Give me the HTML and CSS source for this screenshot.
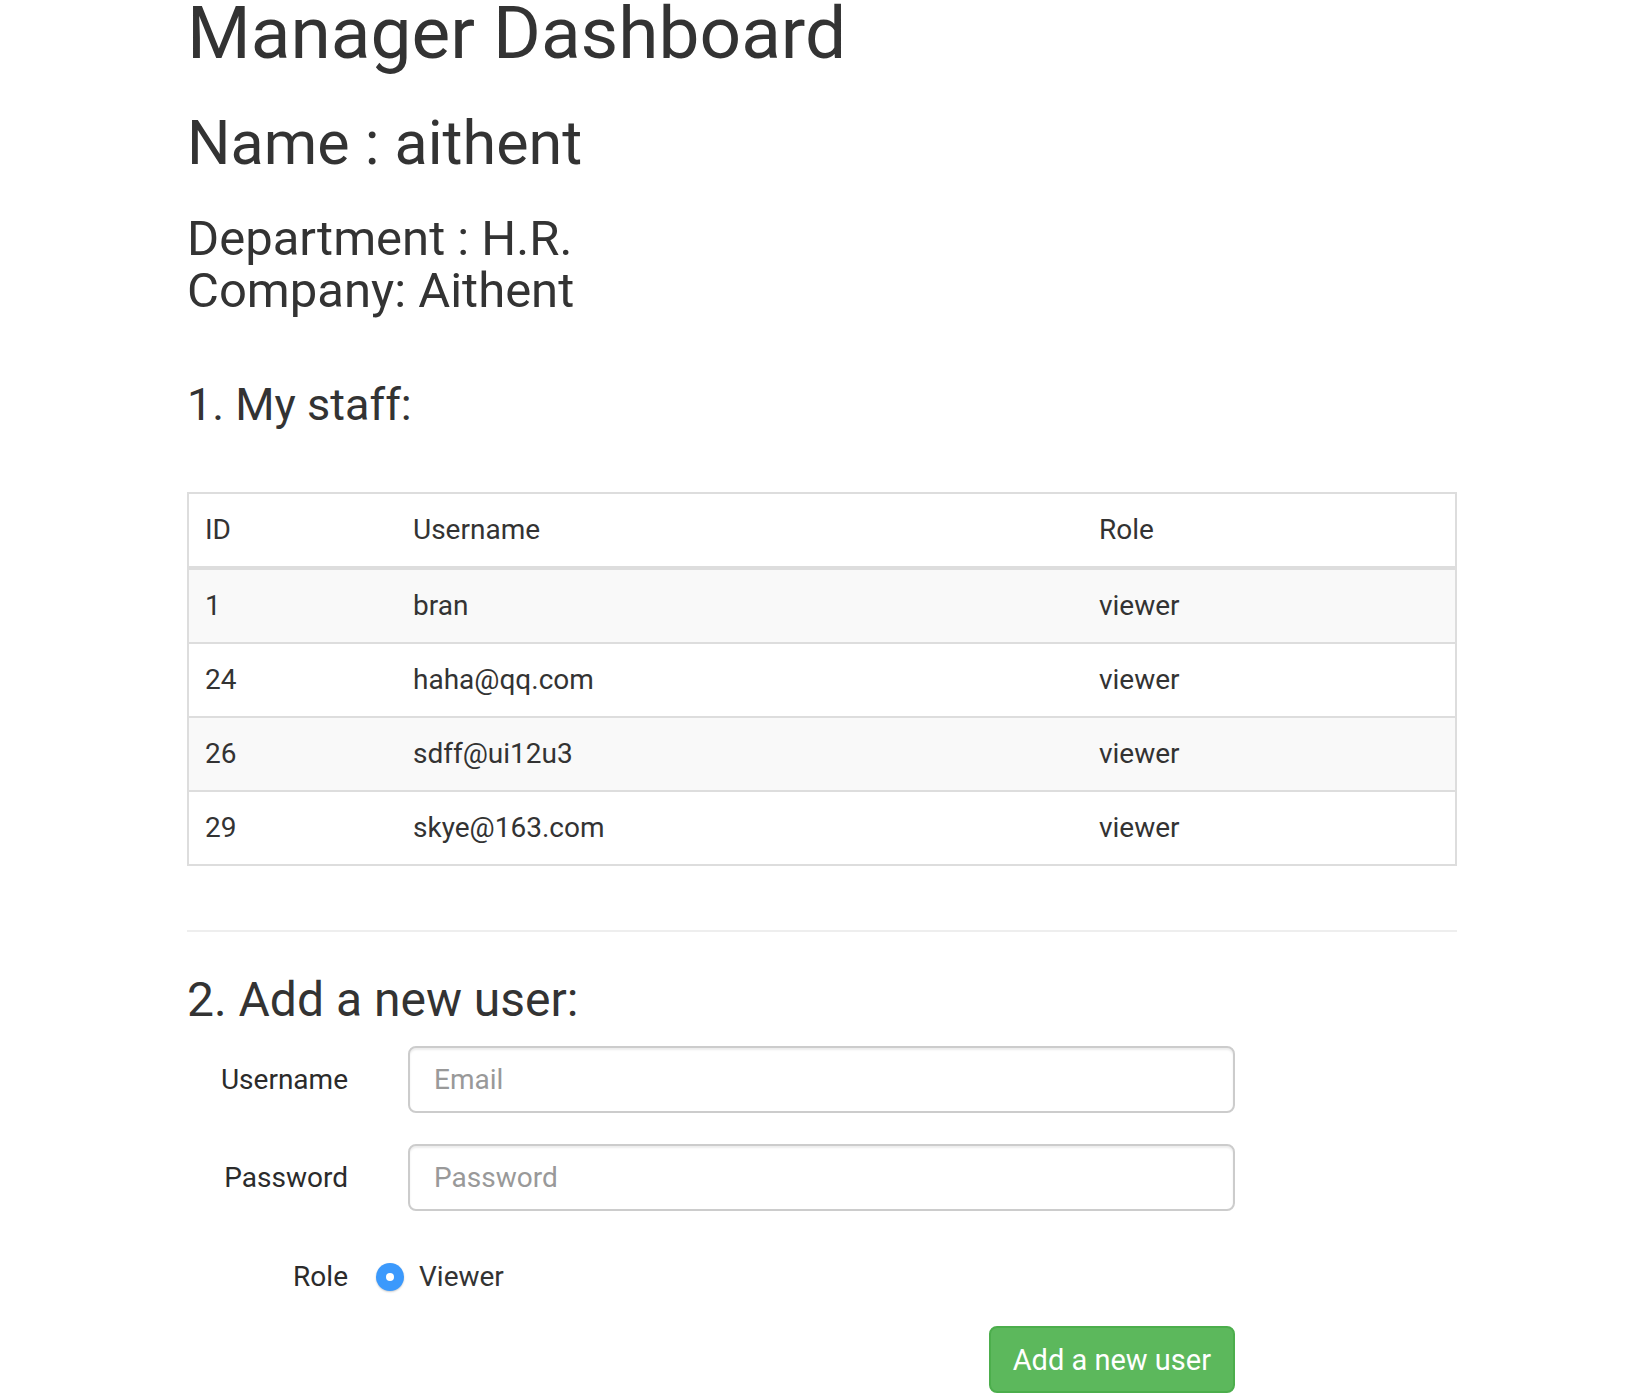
FILE: index.html
```html
<!DOCTYPE html>
<html lang="en">
<head>
<meta charset="utf-8">
<title>Manager Dashboard</title>
<link rel="stylesheet" href="styles.css">
</head>
<body>
<div class="container">
  <h1 class="title">Manager Dashboard</h1>
  <h2 class="name">Name : aithent</h2>
  <div class="info">
    <div>Department : H.R.</div>
    <div>Company: Aithent</div>
  </div>

  <h3 class="section staff-head">1. My staff:</h3>
  <table class="staff">
    <thead>
      <tr><th class="c-id">ID</th><th class="c-user">Username</th><th class="c-role">Role</th></tr>
    </thead>
    <tbody>
      <tr><td>1</td><td>bran</td><td>viewer</td></tr>
      <tr><td>24</td><td>haha@qq.com</td><td>viewer</td></tr>
      <tr><td>26</td><td>sdff@ui12u3</td><td>viewer</td></tr>
      <tr><td>29</td><td>skye@163.com</td><td>viewer</td></tr>
    </tbody>
  </table>

  <hr class="divider">

  <h3 class="section add-head">2. Add a new user:</h3>
  <form class="form">
    <div class="row">
      <label class="lbl" for="u">Username</label>
      <input class="field" id="u" type="email" placeholder="Email">
    </div>
    <div class="row row-pass">
      <label class="lbl" for="p">Password</label>
      <input class="field" id="p" type="password" placeholder="Password">
    </div>
    <div class="row row-role">
      <span class="lbl">Role</span>
      <label class="radio"><input class="radio-input" type="radio" name="role" checked><span>Viewer</span></label>
    </div>
    <div class="actions">
      <button class="btn" type="button">Add a new user</button>
    </div>
  </form>
</div>
</body>
</html>
```
FILE: styles.css
```css
html, body {
  margin: 0;
  padding: 0;
  background: #fff;
}
body {
  font-family: Roboto, "Liberation Sans", sans-serif;
  color: #333;
  font-size: 28px;
  line-height: 40px;
}
.container {
  width: 1270px;
  margin-left: 187px;
}
.title {
  margin: 0;
  font-size: 73px;
  line-height: 66px;
  font-weight: 400;
}
.name {
  margin: 44px 0 0;
  font-size: 61px;
  line-height: 66px;
  font-weight: 400;
}
.info {
  margin-top: 37px;
  font-size: 49px;
  line-height: 52px;
}
.section {
  line-height: 52px;
  font-weight: 400;
  margin: 0;
}
.staff-head {
  margin-top: 62px;
  font-size: 45px;
}
.staff {
  margin-top: 61px;
  width: 1270px;
  border-collapse: collapse;
  border: 2px solid #ddd;
}
.staff th, .staff td {
  text-align: left;
  font-weight: 400;
  padding: 16px;
  line-height: 40px;
  vertical-align: top;
}
.staff th {
  border-bottom: 4px solid #ddd;
}
.staff td {
  border-top: 2px solid #ddd;
}
.c-id { width: 176px; }
.c-user { width: 654px; }
.staff tbody tr:nth-child(odd) td {
  background: #f9f9f9;
}
.divider {
  margin: 64px 0 0;
  border: 0;
  border-top: 2px solid #eee;
  height: 0;
}
.add-head {
  margin-top: 42px;
  font-size: 48px;
}
.form {
  margin-top: 20px;
  width: 1048px;
}
.row {
  display: grid;
  grid-template-columns: 161px 1fr;
  column-gap: 60px;
  align-items: center;
}
.row-pass {
  margin-top: 31px;
}
.lbl {
  text-align: right;
  font-weight: 400;
  font-size: 28px;
  line-height: 40px;
  color: #2b2b2b;
}
.field {
  box-sizing: border-box;
  width: 827px;
  height: 67px;
  padding: 12px 24px;
  font-family: Roboto, "Liberation Sans", sans-serif;
  font-size: 28px;
  color: #555;
  border: 2px solid #ccc;
  border-radius: 8px;
  box-shadow: inset 0 2px 2px rgba(0,0,0,.075);
  outline: none;
}
.field::placeholder {
  color: #999;
}
.row-role {
  margin-top: 46px;
  column-gap: 28px;
}
.radio {
  display: flex;
  align-items: center;
  gap: 15px;
  font-weight: 400;
}
.radio-input {
  appearance: none;
  -webkit-appearance: none;
  margin: 0;
  width: 28px;
  height: 28px;
  border-radius: 50%;
  background: #3b99fc;
  box-shadow: 0 1px 2px rgba(0,0,0,.2);
  display: grid;
  place-items: center;
}
.radio-input::after {
  content: "";
  width: 8px;
  height: 8px;
  border-radius: 50%;
  background: #fff;
}
.actions {
  display: flex;
  justify-content: flex-end;
  width: 1048px;
  margin-top: 29px;
}
.btn {
  box-sizing: border-box;
  height: 67px;
  padding: 0 22px;
  font-family: Roboto, "Liberation Sans", sans-serif;
  font-size: 29px;
  line-height: 40px;
  color: #fff;
  background: #5cb85c;
  border: 2px solid #4cae4c;
  border-radius: 8px;
}
```
